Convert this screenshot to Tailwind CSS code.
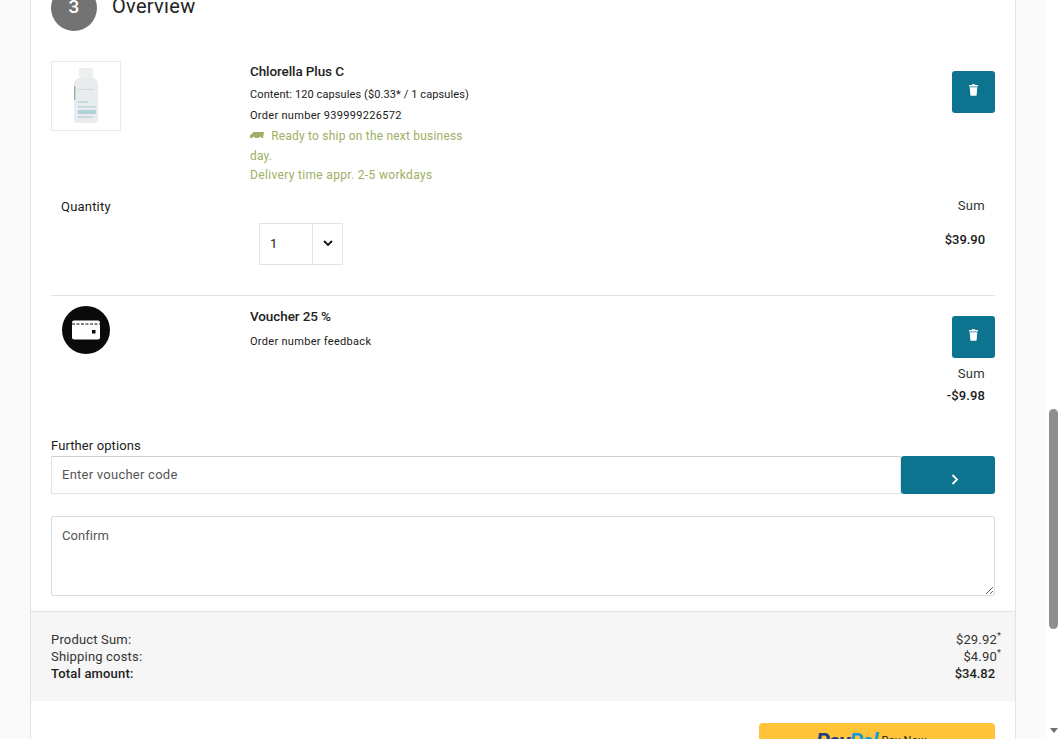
<!DOCTYPE html>
<html lang="en">
<head>
<meta charset="utf-8">
<title>Overview</title>
<script src="https://cdn.jsdelivr.net/npm/@tailwindcss/browser@4"></script>
</head>
<body class="bg-[#fafafa] font-['Roboto',sans-serif] text-[#1a1a1a] tracking-[0.3px]">
<div class="flex h-[739px] w-[1061px] overflow-hidden">
  <div class="flex-1 min-w-0 pl-[30px]">
    <!-- checkout card -->
    <div class="w-[986px] -mt-[15px] bg-white border-x border-[#e3e3e3]">
      <div class="flex items-center gap-[15px] px-5 h-[46px]">
        <div class="w-[46px] h-[46px] rounded-full bg-[#737373] text-white flex items-center justify-center text-[19px] font-medium pb-[1px]">3</div>
        <h2 class="text-[20px] leading-none pb-[4px] text-[#222]">Overview</h2>
      </div>

      <!-- product -->
      <div class="px-5 pt-[30px]">
        <div class="flex">
          <div class="w-[199px] shrink-0">
            <div class="w-[70px] h-[70px] border border-[#e9e9e9] flex items-center justify-center">
              <svg class="blur-[0.6px]" width="26" height="56" viewBox="0 0 26 56">
                <rect x="6" y="0" width="14" height="10" rx="2" fill="#eef0f0"/>
                <path d="M5 10h16q4 2 4 7v34q0 4-3 4H4q-3 0-3-4V17q0-5 4-7z" fill="#e8ecee"/>
                <rect x="1" y="18" width="1.500" height="14" fill="#a3adb0"/>
                <rect x="5" y="21" width="16" height="1" fill="#d0d8da"/>
                <rect x="5" y="33" width="10" height="2" fill="#c5dbe0"/>
                <rect x="5" y="38" width="18" height="1.500" fill="#bcd6dc"/>
                <rect x="5" y="42" width="18" height="4" fill="#b2d2da"/>
                <rect x="5" y="48" width="15" height="2" fill="#c8d8dc"/>
              </svg>
            </div>
          </div>
          <div class="w-[226px] text-[11px] leading-[21px]">
            <h3 class="text-[13.5px] leading-[20px] font-medium text-[#222] tracking-[-0.1px]">Chlorella Plus C</h3>
            <p class="mt-[3px] whitespace-nowrap tracking-[0.1px]">Content: 120 capsules ($0.33* / 1 capsules)</p>
            <p>Order number 939999226572</p>
            <p class="text-[12px] leading-[19.500px] tracking-[0.2px] text-[#9db063] mt-[1px]">
              <svg class="inline-block mr-[4px] mb-[1px]" width="14" height="8" viewBox="0 0 14 8"><path d="M0 3.500L3.500 0H14l-1 6h-1.500a1.300 1.300 0 0 0-2.600 0H5a1.300 1.300 0 0 0-2.600 0H0z" fill="#9db063"/></svg>
              Ready to ship on the next business day.
            </p>
            <p class="text-[12px] leading-[19.500px] tracking-[0.33px] text-[#9db063] whitespace-nowrap">Delivery time appr. 2-5 workdays</p>
          </div>
          <div class="ml-auto pt-[10px]">
            <button class="w-[43px] h-[42px] rounded-[3px] bg-[#0d7490] flex items-center justify-center pb-[4px]">
              <svg width="9" height="12" viewBox="0 0 10 13" fill="#fff"><path d="M3.500 0h3l.6 1H10v1.500H0V1h2.900zM.8 3.500h8.400L8.500 12q-.1 1-1 1h-5q-.9 0-1-1z"/></svg>
            </button>
          </div>
        </div>
        <div class="flex justify-between px-[10px] mt-[10px] text-[13px] leading-[20px]">
          <span class="mt-px tracking-[0.2px]">Quantity</span>
          <span class="text-[#333]">Sum</span>
        </div>
        <div class="flex justify-between pr-[10px] h-[78px]">
          <div class="ml-[208px] mt-[6px] w-[84px] h-[42px] border border-[#e3e3e3] flex text-[13px]">
            <span class="flex-1 pl-[10px] flex items-center">1</span>
            <span class="w-[30px] border-l border-[#e3e3e3] flex items-center justify-center">
              <svg width="10" height="7" viewBox="0 0 10 7" fill="none" stroke="#111" stroke-width="1.800"><path d="M1 1l4 4 4-4"/></svg>
            </span>
          </div>
          <span class="text-[13px] leading-[20px] font-medium tracking-[-0.05px] mt-[13px]">$39.90</span>
        </div>
      </div>

      <!-- voucher -->
      <div class="mx-5 border-t border-[#e3e3e3] flex pt-[10px] h-[113px]">
        <div class="w-[199px] shrink-0 pl-[11px]">
          <div class="w-[48px] h-[48px] rounded-full bg-[#0a0a0a] flex items-center justify-center">
            <svg width="28" height="20" viewBox="0 0 28 20">
              <rect width="28" height="19" y="0.500" rx="2" fill="#fff"/>
              <path d="M0 4h28" stroke="#0a0a0a" stroke-width="1" stroke-dasharray="3 1.500"/>
              <rect x="20" y="10" width="3.500" height="3.500" fill="#0a0a0a"/>
            </svg>
          </div>
        </div>
        <div class="text-[11px] leading-[21px]">
          <h3 class="text-[13.5px] leading-[20px] font-medium text-[#222] tracking-[-0.1px]">Voucher 25 %</h3>
          <p class="mt-[5px]">Order number feedback</p>
        </div>
        <div class="ml-auto flex flex-col items-end">
          <button class="mt-[10px] w-[43px] h-[42px] rounded-[3px] bg-[#0d7490] flex items-center justify-center pb-[4px]">
            <svg width="9" height="12" viewBox="0 0 10 13" fill="#fff"><path d="M3.500 0h3l.6 1H10v1.500H0V1h2.900zM.8 3.500h8.400L8.500 12q-.1 1-1 1h-5q-.9 0-1-1z"/></svg>
          </button>
          <span class="mt-[6px] mr-[10px] text-[13px] leading-[20px] text-[#333]">Sum</span>
          <span class="mt-[2px] mr-[10px] text-[13px] leading-[20px] font-medium tracking-[0.1px]">-$9.98</span>
        </div>
      </div>

      <!-- further options -->
      <div class="px-5 pt-[29px]">
        <label class="block text-[13px] leading-[18px] text-[#222] tracking-[0.1px]">Further options</label>
        <div class="flex h-[38px] mt-[1px]">
          <div class="flex-1 h-[38px] border border-[#e3e3e3] border-t-[#cfcfcf] flex items-center px-[10px] text-[13px] tracking-[0.25px] text-[#555]">Enter voucher code</div>
          <button class="w-[94px] rounded-[3px] bg-[#0d7490] flex items-center justify-center pt-[10px] pl-[14px]">
            <svg width="8" height="11" viewBox="0 0 8 11" fill="none" stroke="#fff" stroke-width="1.800"><path d="M1.500 1l4.500 4.500L1.500 10"/></svg>
          </button>
        </div>
        <textarea class="block w-full h-[80px] mt-[22px] border border-[#dcdcdc] rounded-[2px] px-[10px] py-[9px] text-[13px] leading-[20px] tracking-[0.05px] placeholder:text-[#555] outline-none" placeholder="Confirm"></textarea>
      </div>

      <!-- totals -->
      <div class="mt-[15px] h-[90px] bg-[#f6f6f6] border-t border-[#e3e3e3] px-5 pt-[19px] text-[13px] leading-[17px] text-[#333] tracking-[0.18px]">
        <div class="flex justify-between"><span>Product Sum:</span><span class="-mr-[6px]">$29.92<sup class="text-[9px] leading-none">*</sup></span></div>
        <div class="flex justify-between"><span>Shipping costs:</span><span class="-mr-[6px]">$4.90<sup class="text-[9px] leading-none">*</sup></span></div>
        <div class="flex justify-between font-medium text-[#222]"><span>Total amount:</span><span class="tracking-[-0.05px]">$34.82</span></div>
      </div>

      <!-- paypal -->
      <div class="px-5 pt-[22px] flex justify-end">
        <button class="w-[236px] h-[44px] rounded-[4px] bg-[#ffc439] flex items-start pt-[8px] pl-[57px] whitespace-nowrap">
          <span class="text-[22px] leading-[22px] font-bold italic tracking-[-0.8px] text-[#253b80]">Pay</span><span class="text-[22px] leading-[22px] font-bold italic tracking-[-0.8px] text-[#179bd7]">Pal</span>
          <span class="ml-[4px] text-[11px] leading-[20px] text-[#222]">Pay Now</span>
        </button>
      </div>
    </div>
  </div>

  <!-- scrollbar -->
  <div class="w-[15px] shrink-0 bg-white flex flex-col items-center">
    <div class="mt-[409px] w-[9px] h-[220px] rounded-full bg-[#8f8f8f]"></div>
    <div class="mt-auto mb-[6px] w-0 h-0 border-x-[4px] border-x-transparent border-t-[5px] border-t-[#6f6f6f]"></div>
  </div>
</div>
</body>
</html>
